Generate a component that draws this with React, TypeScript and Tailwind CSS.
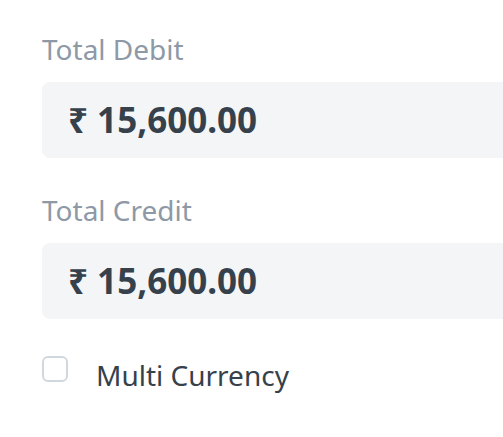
export default function App() {
  return (
    <div className="w-[503px] h-[437px] overflow-hidden bg-white" style={{ fontFamily: '"Noto Sans", sans-serif' }}>
      <div className="pl-[42px] pt-[31px] w-[560px]">
        <div className="text-[28px] leading-[36px] text-[#8d99a6]">Total Debit</div>
        <div className="mt-[15px] h-[76px] rounded-[8px] bg-[#f4f5f7] flex items-center pl-[26px] text-[35px] font-bold text-[#36414c]">
          ₹ 15,600.00
        </div>
        <div className="mt-[34px] text-[28px] leading-[36px] text-[#8d99a6]">Total Credit</div>
        <div className="mt-[15px] h-[76px] rounded-[8px] bg-[#f4f5f7] flex items-center pl-[26px] text-[35px] font-bold text-[#36414c]">
          ₹ 15,600.00
        </div>
        <div className="mt-[37px] flex items-start">
          <div className="w-[26px] h-[26px] rounded-[6px] border-2 border-[#d1d8dd] bg-white" />
          <span className="ml-[28px] text-[28px] leading-[38px] text-[#36414c]">Multi Currency</span>
        </div>
      </div>
    </div>
  );
}
